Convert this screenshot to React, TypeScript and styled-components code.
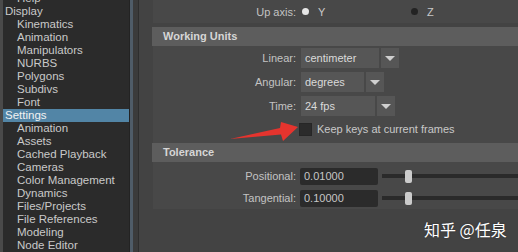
import React from "react";
import styled, { createGlobalStyle } from "styled-components";

const GlobalStyle = createGlobalStyle`
  html, body {
    margin: 0;
    padding: 0;
    background: #434343;
  }
  body {
    font-family: "Liberation Sans", Arial, sans-serif;
    font-size: 11px;
  }
`;

const Window = styled.div`
  position: relative;
  display: flex;
  width: 518px;
  height: 252px;
  overflow: hidden;
  background: #434343;
`;

const Sidebar = styled.div`
  flex: 0 0 126px;
  background: #2b2b2b;
  border-left: 3px solid #4a4a4a;
  border-right: 1px solid #232323;
  overflow: hidden;
`;

const TreeList = styled.ul`
  list-style: none;
  margin: -8px 0 0;
  padding: 0;
  font-size: 11.5px;
`;

const TreeItem = styled.li<{ $level: number; $selected?: boolean }>`
  height: 13px;
  line-height: 13px;
  padding-left: ${(p) => (p.$level ? 14 : 2)}px;
  white-space: nowrap;
  color: ${(p) => (p.$selected ? "#f2f2f2" : "#c9c9c9")};
  background: ${(p) => (p.$selected ? "#5285a6" : "transparent")};
`;

const Splitter = styled.div`
  flex: 0 0 8px;
  background: linear-gradient(to right, #4f5c68 0 3px, #3b3b3b 3px);
  border-right: 1px solid #2e2e2e;
`;

const Main = styled.div`
  flex: 1;
  display: flex;
  flex-direction: column;
  padding-left: 13px;
  background: #434343;
`;

const FrameHeader = styled.div`
  height: 19px;
  line-height: 19px;
  padding-left: 11px;
  background: #5d5d5d;
  color: #d6d6d6;
  font-weight: bold;
`;

const FrameBody = styled.div<{ $pad?: string; $gap?: number }>`
  margin: 0 0 ${(p) => p.$gap || 0}px 1px;
  padding: ${(p) => p.$pad || "0"};
  background: #484848;
`;

const Row = styled.div<{ $h: number }>`
  display: grid;
  grid-template-columns: 143px 1fr;
  column-gap: 4px;
  align-items: center;
  height: ${(p) => p.$h}px;
`;

const Label = styled.span`
  text-align: right;
  color: #c3c3c3;
  white-space: nowrap;
`;

const Controls = styled.div`
  display: flex;
  align-items: center;
  min-width: 0;
`;

const RadioOption = styled.label`
  display: flex;
  align-items: center;
  gap: 9px;
  width: 112px;
  padding-left: 2px;
  color: #c8c8c8;
`;

const RadioDot = styled.span<{ $on?: boolean }>`
  width: 7px;
  height: 7px;
  border-radius: 50%;
  background: ${(p) => (p.$on ? "#e6e6e6" : "#232323")};
`;

const Dropdown = styled.div`
  display: flex;
  gap: 2px;
  margin-left: 1px;
  height: 20px;
`;

const DropField = styled.div<{ $w: number }>`
  width: ${(p) => p.$w}px;
  line-height: 20px;
  padding-left: 4px;
  box-sizing: border-box;
  background: #565656;
  color: #dadada;
  white-space: nowrap;
`;

const DropButton = styled.div`
  width: 18px;
  display: flex;
  align-items: center;
  justify-content: center;
  background: #565656;
`;

const Triangle = styled.span`
  width: 0;
  height: 0;
  border-left: 5px solid transparent;
  border-right: 5px solid transparent;
  border-top: 5px solid #cfcfcf;
`;

const CheckBox = styled.span`
  width: 13px;
  height: 13px;
  margin-left: -1px;
  box-sizing: border-box;
  background: #2b2b2b;
  border: 1px solid #262626;
`;

const CheckText = styled.span`
  margin-left: 5px;
  color: #c8c8c8;
  white-space: nowrap;
`;

const FloatField = styled.div`
  flex: 0 0 78px;
  height: 17px;
  line-height: 17px;
  padding-left: 4px;
  box-sizing: border-box;
  border-radius: 2px;
  background: #2b2b2b;
  color: #c6c6c6;
`;

const Slider = styled.div`
  flex: 1;
  display: flex;
  align-items: center;
  height: 13px;
  margin-left: 4px;
  background: linear-gradient(#2a2a2a, #2a2a2a) center / 100% 4px no-repeat;
`;

const Handle = styled.span<{ $offset: number }>`
  width: 7px;
  height: 13px;
  margin-left: ${(p) => p.$offset}px;
  border-radius: 2px;
  background: #cbcbcb;
`;

const Arrow = styled.svg`
  position: absolute;
  left: 0;
  top: 0;
  pointer-events: none;
`;

const Watermark = styled.div`
  position: absolute;
  left: 424px;
  top: 217px;
  font-family: "Noto Sans CJK SC", "Noto Sans", sans-serif;
  font-size: 16px;
  color: #ffffff;
  text-shadow: 0 0 2px rgba(0, 0, 0, 0.35);
  white-space: nowrap;
`;

const tree: { name: string; level: number; selected?: boolean }[] = [
  { name: "Help", level: 1 },
  { name: "Display", level: 0 },
  { name: "Kinematics", level: 1 },
  { name: "Animation", level: 1 },
  { name: "Manipulators", level: 1 },
  { name: "NURBS", level: 1 },
  { name: "Polygons", level: 1 },
  { name: "Subdivs", level: 1 },
  { name: "Font", level: 1 },
  { name: "Settings", level: 0, selected: true },
  { name: "Animation", level: 1 },
  { name: "Assets", level: 1 },
  { name: "Cached Playback", level: 1 },
  { name: "Cameras", level: 1 },
  { name: "Color Management", level: 1 },
  { name: "Dynamics", level: 1 },
  { name: "Files/Projects", level: 1 },
  { name: "File References", level: 1 },
  { name: "Modeling", level: 1 },
  { name: "Node Editor", level: 1 },
];

const DropRow = ({ label, value, w }: { label: string; value: string; w: number }) => (
  <Row $h={24}>
    <Label>{label}</Label>
    <Controls>
      <Dropdown>
        <DropField $w={w}>{value}</DropField>
        <DropButton>
          <Triangle />
        </DropButton>
      </Dropdown>
    </Controls>
  </Row>
);

const FloatRow = ({ label, value, offset }: { label: string; value: string; offset: number }) => (
  <Row $h={22}>
    <Label>{label}</Label>
    <Controls>
      <FloatField>{value}</FloatField>
      <Slider>
        <Handle $offset={offset} />
      </Slider>
    </Controls>
  </Row>
);

export default function App() {
  return (
    <>
      <GlobalStyle />
      <Window>
        <Sidebar>
          <TreeList>
            {tree.map((t, i) => (
              <TreeItem key={i} $level={t.level} $selected={t.selected}>
                {t.name}
              </TreeItem>
            ))}
          </TreeList>
        </Sidebar>
        <Splitter />
        <Main>
          <FrameBody $gap={4}>
            <Row $h={23}>
              <Label>Up axis:</Label>
              <Controls>
                <RadioOption>
                  <RadioDot $on />Y
                </RadioOption>
                <RadioOption>
                  <RadioDot />Z
                </RadioOption>
              </Controls>
            </Row>
          </FrameBody>

          <FrameHeader>Working Units</FrameHeader>
          <FrameBody $pad="0 0 3px">
            <DropRow label="Linear:" value="centimeter" w={78} />
            <DropRow label="Angular:" value="degrees" w={63} />
            <DropRow label="Time:" value="24 fps" w={74} />
            <Row $h={22}>
              <span />
              <Controls>
                <CheckBox />
                <CheckText>Keep keys at current frames</CheckText>
              </Controls>
            </Row>
          </FrameBody>

          <FrameHeader>Tolerance</FrameHeader>
          <FrameBody $pad="3px 0 0">
            <FloatRow label="Positional:" value="0.01000" offset={23} />
            <FloatRow label="Tangential:" value="0.10000" offset={23} />
          </FrameBody>
        </Main>

        <Arrow width="518" height="252" viewBox="0 0 518 252">
          <polygon
            points="230,139 280,128 281,122 298,127 283,141 281,134.5"
            fill="#e5342e"
          />
        </Arrow>
        <Watermark>知乎 @任泉</Watermark>
      </Window>
    </>
  );
}
